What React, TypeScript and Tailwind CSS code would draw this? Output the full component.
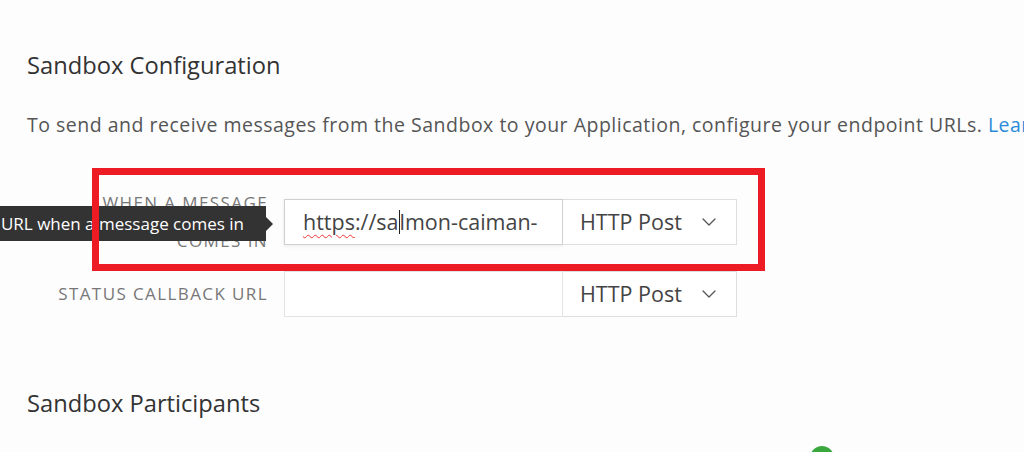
import { ChevronDown } from "lucide-react";

function MethodSelect() {
  return (
    <div className="flex items-center justify-between w-[174px] h-full border border-l-0 border-[#dedede] bg-white pl-[17px] pr-[15px]">
      <span className="text-[21.5px] text-[#444]">HTTP Post</span>
      <ChevronDown size={24} strokeWidth={1.3} className="text-[#555]" />
    </div>
  );
}

export default function App() {
  return (
    <div
      className="relative w-[1024px] h-[452px] overflow-hidden bg-[#fdfdfd]"
      style={{ fontFamily: '"Open Sans", "Noto Sans", sans-serif' }}
    >
      <div className="pl-[27px] pt-[48px]">
        <h2 className="text-[23.7px] leading-[34px] text-[#333]">Sandbox Configuration</h2>
        <p className="mt-[30px] text-[19.5px] leading-[26px] tracking-[0.5px] text-[#555] whitespace-nowrap">
          To send and receive messages from the Sandbox to your Application, configure your endpoint URLs.{" "}
          <span className="text-[#2b8bd9]">Learn more</span>
        </p>

        <div className="mt-[61px] flex flex-col gap-[26px]">
          <div className="flex items-center h-[46px]">
            <div className="w-[241px] text-right text-[17px] leading-[38px] tracking-[1.4px] text-[#777] uppercase">
              <div>When a message</div>
              <div>comes in</div>
            </div>
            <div className="ml-[16px] flex h-full">
              <div className="flex items-center w-[279px] h-full border border-[#cfcfcf] bg-white pl-[18px] text-[21.5px] text-[#444] whitespace-nowrap overflow-hidden shadow-[0_1px_4px_rgba(0,0,0,0.08)]">
                <span className="underline decoration-wavy decoration-[#e33] decoration-1 underline-offset-[4px]">https</span>
                <span>://sa</span>
                <span className="inline-block w-px h-[24px] bg-[#222]" />
                <span>lmon-caiman-</span>
              </div>
              <MethodSelect />
            </div>
          </div>

          <div className="flex items-center h-[46px]">
            <div className="w-[241px] text-right text-[17px] tracking-[1.4px] text-[#777] uppercase whitespace-nowrap">
              Status callback URL
            </div>
            <div className="ml-[16px] flex h-full">
              <div className="w-[279px] h-full border border-[#e3e3e3] bg-white" />
              <MethodSelect />
            </div>
          </div>
        </div>

        <h2 className="mt-[69px] text-[23.7px] leading-[34px] text-[#333]">Sandbox Participants</h2>
      </div>

      {/* tooltip */}
      <div className="absolute left-0 top-[206px] flex items-center">
        <div className="flex justify-end w-[266px] h-[35px] items-center bg-[#333] overflow-hidden pr-[22px]">
          <span className="text-[17px] text-white whitespace-nowrap">Callback URL when a message comes in</span>
        </div>
        <div className="w-0 h-0 border-y-[7px] border-y-transparent border-l-[7px] border-l-[#333]" />
      </div>

      {/* annotation box */}
      <div className="absolute left-[92px] top-[168px] w-[673px] h-[103px] border-[7px] border-[#ed1c24]" />

      <div className="absolute left-[810px] top-[446px] w-[24px] h-[24px] rounded-full bg-[#3aa83f]" />
    </div>
  );
}
